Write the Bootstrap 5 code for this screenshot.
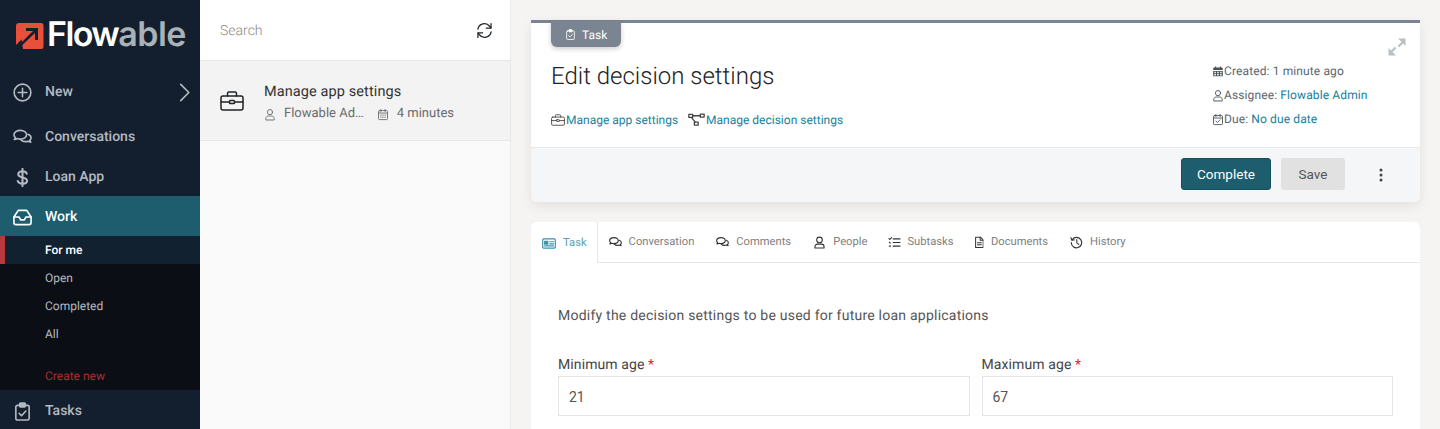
<!DOCTYPE html>
<html lang="en">
<head>
<meta charset="utf-8">
<title>Flowable Work</title>
<link href="https://cdn.jsdelivr.net/npm/bootstrap@5.3.0/dist/css/bootstrap.min.css" rel="stylesheet">
<style>
html,body{height:429px;overflow:hidden}
body{font-family:Roboto,"Liberation Sans",sans-serif;background:#f5f4f2;color:#333;font-size:13px;text-rendering:geometricPrecision}
.ic{fill:none;stroke:currentColor;stroke-width:1.5;stroke-linecap:round;stroke-linejoin:round;flex:none}
a{text-decoration:none}
.app{height:429px;overflow:hidden}
.side{width:200px;background:#131f2e;color:#b4bac1;flex:none;overflow:hidden}
.logo-box{height:71px;padding:14px 0 0 15px;gap:3px}
.logo-text{font-family:Inter,sans-serif;font-weight:600;font-size:34px;line-height:42px;letter-spacing:-1.6px;color:#fff}
.logo-text span{color:#a9b1b9;letter-spacing:-.5px}
.main-item{height:40px;padding:2px 0 0 13px;font-size:14px;font-weight:500;color:#b4bac1;gap:13px}
.main-item .ic{width:19px;height:19px;stroke-width:1.7}
.new-item{margin-bottom:5px}
.chev{margin-right:9px}
.main-item .chev{width:12px;height:19px}
.main-item .dollar{stroke-width:2.200}
.work-item{background:#1d5d6e;color:#fff}
.tasks-item{height:39px;padding-top:3px}
.sub-nav{background:#0b0e15;height:154px}
.sub-link{height:28px;padding:0 0 0 45px;font-size:12px;color:#b4bac1;font-weight:400}
.sub-on{background:#122130;color:#fff;border-left:5px solid #b8393c;padding-left:40px;font-weight:500}
.sub-new{color:#ad2f31;margin-top:14px}
.mid{width:311px;flex:none;background:#fafafa;border-right:1px solid #e8eaee}
.search-bar{height:61px;background:#fff;border-bottom:1px solid #e8e8e8;padding:0 17px 0 20px;color:#8a8a8a;font-size:14px;font-weight:300}
.search-label{padding-top:2px}
.mid-row{height:80px;background:#f3f3f3;border-bottom:1px solid #e8e8e8;padding:0 0 0 20px;gap:20px}
.mid-text{padding-top:4px}
.mid-title{font-size:14.5px;color:#333;line-height:18px;margin-bottom:5px;letter-spacing:.1px}
.mid-meta{font-size:13px;color:#6b6b6b;gap:8px;line-height:16px}
.meta-gap{margin-left:5px}
.content{padding:20px 20px 0 20px;min-width:0}
.head-card{border-radius:0 0 6px 6px;border:0;border-top:3px solid #7a8591;box-shadow:0 4px 12px rgba(0,0,0,.08);margin-bottom:20px;position:relative}
.type-tag{position:absolute;top:-2px;left:20px;width:70px;height:26px;background:#7a8591;color:#fff;border-radius:0 0 6px 6px;font-size:12px;gap:6px;padding:1px 0 0 14px;box-shadow:0 2px 5px rgba(0,0,0,.2)}
.head-body{height:124px;padding:0 20px;border:0}
.head-title{font-size:24px;font-weight:300;color:#222;line-height:30px;margin:38px 0 0}
.head-links{gap:10px;margin-top:21px;font-size:12px;line-height:16px}
.teal{color:#17819b}
.head-links .ic{color:#444;width:14px;height:14px;margin-right:1px}
.head-links .ic.wide{width:17px}
.info-col{width:188px;padding-top:36px;font-size:12px;color:#5c6670;letter-spacing:.12px}
.info-col>div{height:24px;gap:0}
.info-col .ic{width:12px;height:13px;color:#4a525a}
.expand{position:absolute;right:14px;top:15px;color:#b9c0c4;width:18px;height:18px}
.head-foot{height:55px;background:#f5f6f8;border-top:1px solid #e6e9ed;border-radius:0 0 6px 6px;padding:0 31px 2px 0;gap:10px}
.btn-done{background:#1d5d6e;border:1px solid #174e5d;color:#fff;font-size:13.5px;width:90px;height:32px;padding:0;border-radius:3px}
.btn-save{background:#e1e1e1;border:0;color:#555;font-size:13.5px;width:64px;height:32px;padding:0;border-radius:3px;margin-right:18px}
.more{color:#444;width:16px;height:16px;margin-top:2px}
.body-card{border:0;border-radius:6px 6px 0 0;height:207px;overflow:hidden}
.tabs-bar{height:41px;border-bottom:1px solid #e8e8e8}
.tab-a{height:40px;padding:1px 11px 0;gap:7px;font-size:11.2px;color:#808080;font-weight:400}
.tab-a .ic{width:13px;height:13px;color:#333;stroke-width:1.7}
.tab-on{color:#5b9fb3;border-right:1px solid #e8e8e8;height:41px;padding-right:10px;background:#fff;position:relative}
.tab-on.tab-a .ic{color:#3d94ab;width:14px}
.tab-a .ic.thin{width:8.5px}
.tab-people{padding:1px 10px 0 11px}
.tab-sub{gap:6px}
.form-area{padding:44px 27px 0}
.form-note{font-size:14px;color:#555;line-height:18px;margin:0 0 32px;letter-spacing:.23px}
.cols-tight{--bs-gutter-x:12px}
.lbl{font-size:14px;color:#444;line-height:16px;margin-bottom:3px;display:block;letter-spacing:.1px}
.req{color:#e02020}
.inp{height:40px;border:1px solid #e5e5e5;border-radius:0;font-size:14px;color:#555;padding:2px 10px 0}
</style>
</head>
<body>
<svg width="0" height="0" class="position-absolute">
<defs>
<symbol id="i-plus" viewBox="0 0 20 20"><circle cx="10" cy="10" r="8.800"/><path d="M10 5.500v9M5.500 10h9"/></symbol>
<symbol id="i-chat" viewBox="0 0 20 18"><path d="M7.800 1.500C4 1.500 1 3.500 1 6.200c0 1.200.6 2.200 1.500 3-.2.800-.7 1.400-1.200 1.900 1.200 0 2.300-.4 3-1 1.200.4 2.300.6 3.500.6 3.700 0 6.500-2 6.500-4.500S11.500 1.500 7.800 1.500z"/><path d="M15.800 5.600c1.900.8 3.200 2.100 3.200 3.700 0 1.100-.5 2-1.300 2.700.1.800.6 1.400 1 1.900-1 0-2-.4-2.700-1-.9.300-1.800.5-2.800.5-2.100 0-4-.8-5-2"/></symbol>
<symbol id="i-inbox" viewBox="0 0 20 18"><path d="M5.500 1.500h9L19 8.500v6a2 2 0 0 1-2 2H3a2 2 0 0 1-2-2v-6z"/><path d="M1 8.500h5.500l1.500 3h4l1.500-3H19"/></symbol>
<symbol id="i-clip" viewBox="0 0 20 20"><rect x="3" y="3.500" width="14" height="15.500" rx="1.600"/><rect x="7" y="1.200" width="6" height="4" rx="1" fill="currentColor"/><path d="M6.500 12l2.500 2.500 4.500-5"/></symbol>
<symbol id="i-sync" viewBox="0 0 20 20"><path d="M2.200 8.500A7.800 7.800 0 0 1 16 5L17.500 7"/><path d="M17.700 1.800V7.300h-5.500"/><path d="M17.800 11.500A7.800 7.800 0 0 1 4 15L2.500 13"/><path d="M2.300 18.200v-5.500h5.500"/></symbol>
<symbol id="i-case" viewBox="0 0 24 20"><rect x="1" y="5" width="22" height="14" rx="2"/><path d="M7.500 5V2.500a1.500 1.500 0 0 1 1.500-1.500h6a1.500 1.500 0 0 1 1.500 1.500V5M1 11h8.500M14.500 11H23"/><rect x="9.500" y="9.500" width="5" height="3" rx=".8"/></symbol>
<symbol id="i-user" viewBox="0 0 20 20"><circle cx="10" cy="6" r="4.300"/><path d="M3 18.500v-2c0-2.200 1.800-4 4-4h6c2.200 0 4 1.800 4 4v2z"/></symbol>
<symbol id="i-cal" viewBox="0 0 20 20"><rect x="2.500" y="3.500" width="15" height="15" rx="1.500"/><path d="M2.500 7.500h15M6.500 1.500v3.500M13.500 1.500v3.500M6 11h1M9.500 11h1M13 11h1M6 14.500h1M9.500 14.500h1M13 14.500h1"/></symbol>
<symbol id="i-calfill" viewBox="0 0 20 20"><path fill="currentColor" stroke="none" d="M2 5a1.500 1.500 0 0 1 1.500-1.500H5V1.500h2v2h6v-2h2v2h1.500A1.500 1.500 0 0 1 18 5v2.500H2zM2 9h16v7.500a1.500 1.500 0 0 1-1.500 1.500h-13A1.500 1.500 0 0 1 2 16.500zm2 1.500V13h2.500v-2.500zm4.700 0V13h2.600v-2.500zm4.800 0V13H16v-2.500zM4 14.200v2.400h2.500v-2.400zm4.700 0v2.400h2.600v-2.400zm4.800 0v2.400H16v-2.400z"/></symbol>
<symbol id="i-calchk" viewBox="0 0 20 20"><rect x="2.500" y="3.500" width="15" height="15" rx="1.500"/><path d="M2.500 7.500h15M6.500 1.500v3.500M13.500 1.500v3.500M6.500 12.500l2.500 2.500 4.500-4.500"/></symbol>
<symbol id="i-flow" viewBox="0 0 20 16"><rect x="1" y="1.500" width="4.500" height="3.500"/><rect x="14.500" y="1" width="4.500" height="3.500"/><rect x="7.500" y="10.500" width="4.500" height="3.500"/><path d="M5.500 3h9M4 5l4.500 5.500"/></symbol>
<symbol id="i-expand" viewBox="0 0 18 18"><path fill="currentColor" stroke="none" d="M10 .5h7.500V8l-2.500-2.500-3.800 3.800-1.500-1.500L13.500 4zM.5 17.500V10L3 12.500l3.800-3.800 1.500 1.500L4.500 14 8 17.500z"/></symbol>
<symbol id="i-card" viewBox="0 0 20 16"><rect x="1" y="1.500" width="18" height="13" rx="1.500"/><rect x="3.800" y="5" width="4.500" height="4" fill="currentColor"/><path d="M11 5.500h5.500M11 8.500h5.500M3.800 11.500h12.700"/></symbol>
<symbol id="i-list" viewBox="0 0 20 20"><path d="M8 4.500h10.500M8 10h10.500M8 15.500h10.500"/><path d="M1.500 4l1.300 1.300L5.500 2.500"/><path d="M2 9.500l1.500 1.500M2 15.500h2"/></symbol>
<symbol id="i-doc" viewBox="3 1 14 18.500"><path d="M4 1.500h8l4.500 4.500v12.500H4z"/><path d="M11.500 1.500v5h5M7 10.500h6.500M7 14h6.500"/></symbol>
<symbol id="i-hist" viewBox="0 0 20 20"><path d="M3.500 5.500A8 8 0 1 1 2 10"/><path d="M1.500 2.500l1 4 4-.5"/><path d="M10.500 5.500v5l3 2.500"/></symbol>
</defs>
</svg>

<div class="app d-flex">
  <nav class="side d-flex flex-column">
    <div class="logo-box d-flex align-items-start">
      <svg width="29" height="30" viewBox="0 0 29 30" class="mt-2 flex-none">
        <path d="M4 1h22a2.500 2.500 0 0 1 2.500 2.500v21a2.500 2.500 0 0 1-2.500 2.500H8z" fill="#e8503a"/>
        <path d="M1 4a3 3 0 0 1 3-3h3v16L1 23z" fill="#e8503a"/>
        <path d="M1 29L20 11v7h3V6H11v3h7L0 27z" fill="#131f2e"/>
      </svg>
      <div class="logo-text">Flow<span>able</span></div>
    </div>
    <a class="main-item new-item d-flex align-items-center" href="#"><svg class="ic"><use href="#i-plus"/></svg><span class="flex-grow-1">New</span><svg class="ic chev" viewBox="0 0 12 20"><path d="M1.500 1.500L10 10l-8.500 8.500"/></svg></a>
    <a class="main-item d-flex align-items-center" href="#"><svg class="ic"><use href="#i-chat"/></svg>Conversations</a>
    <a class="main-item d-flex align-items-center" href="#"><svg class="ic dollar" viewBox="0 0 20 20"><path d="M14.500 6C14 4.300 12.300 3.500 10 3.500 7.400 3.500 5.500 4.800 5.500 6.600c0 4.400 9.300 2.400 9.300 6.800 0 1.900-2 3.100-4.800 3.100-2.600 0-4.400-1-5-2.800M10 1v18"/></svg>Loan App</a>
    <a class="main-item work-item d-flex align-items-center" href="#"><svg class="ic"><use href="#i-inbox"/></svg>Work</a>
    <div class="sub-nav d-flex flex-column">
      <a class="sub-link sub-on d-flex align-items-center" href="#">For me</a>
      <a class="sub-link d-flex align-items-center" href="#">Open</a>
      <a class="sub-link d-flex align-items-center" href="#">Completed</a>
      <a class="sub-link d-flex align-items-center" href="#">All</a>
      <a class="sub-link sub-new d-flex align-items-center" href="#">Create new</a>
    </div>
    <a class="main-item tasks-item d-flex align-items-center" href="#"><svg class="ic"><use href="#i-clip"/></svg>Tasks</a>
  </nav>

  <section class="mid">
    <div class="search-bar d-flex align-items-center justify-content-between"><span class="search-label">Search</span><svg class="ic text-dark" width="17" height="17"><use href="#i-sync"/></svg></div>
    <div class="mid-row d-flex align-items-center">
      <svg class="ic text-dark" width="24" height="20"><use href="#i-case"/></svg>
      <div class="mid-text">
        <div class="mid-title">Manage app settings</div>
        <div class="mid-meta d-flex align-items-center"><svg class="ic" width="12" height="13"><use href="#i-user"/></svg><span>Flowable Ad…</span><svg class="ic meta-gap" width="12" height="13"><use href="#i-cal"/></svg><span>4 minutes</span></div>
      </div>
    </div>
  </section>

  <main class="content flex-grow-1">
    <div class="card head-card">
      <div class="type-tag d-flex align-items-center"><svg class="ic" width="11" height="13"><use href="#i-clip"/></svg>Task</div>
      <svg class="ic expand"><use href="#i-expand"/></svg>
      <div class="head-body d-flex justify-content-between">
        <div>
          <h1 class="head-title">Edit decision settings</h1>
          <div class="head-links d-flex">
            <a class="teal d-flex align-items-center" href="#"><svg class="ic"><use href="#i-case"/></svg>Manage app settings</a>
            <a class="teal d-flex align-items-center" href="#"><svg class="ic wide"><use href="#i-flow"/></svg>Manage decision settings</a>
          </div>
        </div>
        <div class="info-col">
          <div class="d-flex align-items-center"><svg class="ic"><use href="#i-calfill"/></svg><span>Created: 1 minute ago</span></div>
          <div class="d-flex align-items-center"><svg class="ic"><use href="#i-user"/></svg><span>Assignee: <a class="teal" href="#">Flowable Admin</a></span></div>
          <div class="d-flex align-items-center"><svg class="ic"><use href="#i-calchk"/></svg><span>Due: <a class="teal" href="#">No due date</a></span></div>
        </div>
      </div>
      <div class="head-foot d-flex align-items-center justify-content-end">
        <button class="btn btn-done" type="button">Complete</button>
        <button class="btn btn-save" type="button">Save</button>
        <svg class="more" viewBox="0 0 16 16"><circle cx="8" cy="3" r="1.500" fill="currentColor"/><circle cx="8" cy="8" r="1.500" fill="currentColor"/><circle cx="8" cy="13" r="1.500" fill="currentColor"/></svg>
      </div>
    </div>

    <div class="card body-card">
      <div class="tabs-bar d-flex">
        <a class="tab-a tab-on d-flex align-items-center" href="#"><svg class="ic"><use href="#i-card"/></svg>Task</a>
        <a class="tab-a d-flex align-items-center" href="#"><svg class="ic"><use href="#i-chat"/></svg>Conversation</a>
        <a class="tab-a d-flex align-items-center" href="#"><svg class="ic"><use href="#i-chat"/></svg>Comments</a>
        <a class="tab-a tab-people d-flex align-items-center" href="#"><svg class="ic"><use href="#i-user"/></svg>People</a>
        <a class="tab-a tab-sub d-flex align-items-center" href="#"><svg class="ic"><use href="#i-list"/></svg>Subtasks</a>
        <a class="tab-a d-flex align-items-center" href="#"><svg class="ic thin"><use href="#i-doc"/></svg>Documents</a>
        <a class="tab-a d-flex align-items-center" href="#"><svg class="ic"><use href="#i-hist"/></svg>History</a>
      </div>
      <div class="form-area">
        <p class="form-note">Modify the decision settings to be used for future loan applications</p>
        <div class="row cols-tight">
          <div class="col-6"><label class="lbl" for="mina">Minimum age <span class="req">*</span></label><input id="mina" class="form-control inp" value="21"></div>
          <div class="col-6"><label class="lbl" for="maxa">Maximum age <span class="req">*</span></label><input id="maxa" class="form-control inp" value="67"></div>
        </div>
      </div>
    </div>
  </main>
</div>
<script src="https://cdn.jsdelivr.net/npm/bootstrap@5.3.0/dist/js/bootstrap.bundle.min.js"></script>
</body>
</html>
